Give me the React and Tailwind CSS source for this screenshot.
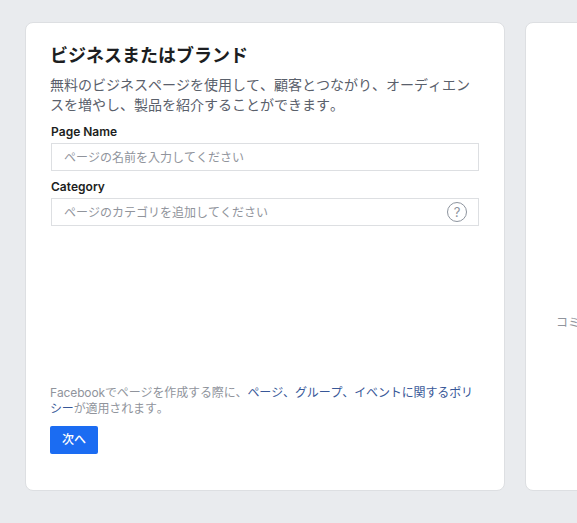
import React from "react";

const font = { fontFamily: "Inter, 'Noto Sans CJK JP', sans-serif" };

const Field = ({ label, placeholder, help }) => {
  return (
    <div className="ml-px">
      <label className="block h-[21px] text-[12px] leading-[20px] font-semibold text-[#1c1e21]">{label}</label>
      <div className="flex h-[28px] items-center justify-between border border-[#dddfe2] bg-white pl-[12px] pr-[11px]">
        <span className="pt-px text-[12px] text-[#90949c]">{placeholder}</span>
        {help && (
          <span className="flex h-[20px] w-[20px] items-center justify-center rounded-full border border-[#8d949e] text-[13px] leading-none text-[#8d949e]">
            ?
          </span>
        )}
      </div>
    </div>
  );
};

export default function App() {
  return (
    <div
      className="flex h-[523px] w-[577px] gap-[20px] overflow-hidden bg-[#e9ebee] pl-[25px] pt-[22px] [font-kerning:none] [font-feature-settings:'palt'_0]"
      style={font}
    >
      <div className="flex h-[469px] w-[480px] shrink-0 flex-col rounded-[8px] border border-[#dddfe2] bg-white pb-[36px] pl-[24px] pr-[25px] pt-[21px]">
        <h1 className="text-[18px] leading-[24px] font-bold text-[#1c1e21]">ビジネスまたはブランド</h1>
        <p className="mt-[7px] text-[14px] leading-[20px] text-[#5a606b]">
          無料のビジネスページを使用して、顧客とつながり、オーディエンスを増やし、製品を紹介することができます。
        </p>
        <div className="mt-[7px] flex flex-col gap-[6px]">
          <Field label="Page Name" placeholder="ページの名前を入力してください" />
          <Field label="Category" placeholder="ページのカテゴリを追加してください" help />
        </div>
        <div className="mt-auto">
          <p className="text-[12px] leading-[16px] tracking-[-0.13px] text-[#90949c]">
            Facebookでページを作成する際に、
            <span className="text-[#385898]">ページ、グループ、イベントに関するポリシー</span>
            が適用されます。
          </p>
          <button className="mt-[9px] flex h-[28px] w-[48px] items-center justify-center rounded-[2px] bg-[#1b6cf2] text-[12px] font-medium text-white">
            次へ
          </button>
        </div>
      </div>
      <div className="h-[469px] w-[480px] shrink-0 rounded-[8px] border border-[#dddfe2] bg-white pl-[30px] pt-[291px]">
        <p className="text-[12px] leading-[18px] whitespace-nowrap text-[#90949c]">コミュニティまたは公人</p>
      </div>
    </div>
  );
}
